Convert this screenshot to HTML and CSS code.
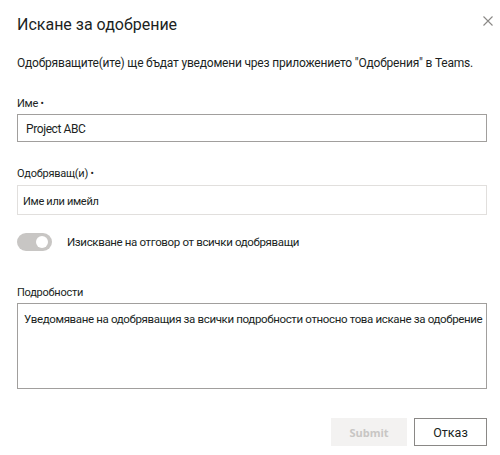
FILE: index.html
```html
<!DOCTYPE html>
<html lang="bg">
<head>
    <meta charset="UTF-8">
    <meta name="viewport" content="width=device-width, initial-scale=1.0">
    <title>Искане за одобрение</title>
    <link rel="stylesheet" href="styles.css">
</head>
<body>
    <div class="dialog">
        <div class="dialog-head">
            <h1>Искане за одобрение</h1>
            <button class="close" type="button" aria-label="Затвори">
                <svg width="10" height="10" viewBox="0 0 10 10">
                    <path d="M0.5 0.5 L9.5 9.5 M9.5 0.5 L0.5 9.5" stroke="#8a8886" stroke-width="1.1" fill="none"/>
                </svg>
            </button>
        </div>

        <p class="intro">Одобряващите(ите) ще бъдат уведомени чрез приложението "Одобрения" в Teams.</p>

        <div class="field field-name">
            <label>Име <span class="req">•</span></label>
            <div class="input input-dark">Project ABC</div>
        </div>

        <div class="field field-approvers">
            <label>Одобряващ(и) <span class="req">•</span></label>
            <div class="input input-light">Име или имейл</div>
        </div>

        <div class="toggle-row">
            <span class="toggle"><span class="knob"></span></span>
            <span class="toggle-label">Изискване на отговор от всички одобряващи</span>
        </div>

        <div class="field field-details">
            <label>Подробности</label>
            <div class="textarea">Уведомяване на одобряващия за всички подробности относно това искане за одобрение</div>
        </div>

        <div class="actions">
            <button class="btn btn-submit" type="button" disabled>Submit</button>
            <button class="btn btn-cancel" type="button">Отказ</button>
        </div>
    </div>
</body>
</html>
```

FILE: styles.css
```css
body {
    margin: 0;
    background: #ffffff;
    font-family: Roboto, "Liberation Sans", Arial, sans-serif;
    color: #201f1e;
}
.dialog {
    width: 500px;
    height: 455px;
    box-sizing: border-box;
    padding: 13px 13px 0 17px;
}
.dialog-head {
    display: flex;
    justify-content: space-between;
    align-items: flex-start;
}
.dialog-head h1 {
    margin: 0;
    font-size: 16px;
    font-weight: normal;
    line-height: 24px;
    color: #201f1e;
}
.close {
    border: none;
    background: none;
    padding: 0;
    margin-top: 3px;
    margin-right: -6px;
    width: 10px;
    height: 10px;
    line-height: 0;
}
.intro {
    margin: 18px 0 0 0;
    font-size: 12px;
    line-height: 16px;
    letter-spacing: -0.2px;
    white-space: nowrap;
}
.field label {
    display: block;
    font-size: 11px;
    line-height: 15px;
    letter-spacing: -0.25px;
}
.req {
    font-size: 10px;
    line-height: 1;
}
.field-name {
    margin-top: 25px;
}
.field-name label {
    margin-bottom: 3px;
}
.field-approvers {
    margin-top: 24px;
}
.field-approvers label {
    margin-bottom: 4px;
}
.field-details {
    margin-top: 34px;
}
.field-details label {
    margin-bottom: 3px;
}
.input {
    box-sizing: border-box;
    white-space: nowrap;
}
.input-dark {
    height: 28px;
    border: 1px solid #a19f9d;
    padding: 3px 8px 0;
    font-size: 12px;
    line-height: 23px;
    letter-spacing: -0.4px;
}
.input-light {
    height: 30px;
    border: 1px solid #e1dfdd;
    padding: 4px 5px 0;
    font-size: 11px;
    line-height: 24px;
    letter-spacing: -0.3px;
}
.toggle-row {
    display: flex;
    align-items: center;
    margin-top: 18px;
    height: 18px;
}
.toggle {
    width: 35px;
    height: 18px;
    border-radius: 9px;
    background: #c8c6c4;
    position: relative;
    flex: none;
}
.knob {
    position: absolute;
    width: 12px;
    height: 12px;
    border-radius: 50%;
    background: #ffffff;
    top: 3px;
    right: 4px;
}
.toggle-label {
    margin-left: 15px;
    font-size: 11.5px;
    line-height: 16px;
    letter-spacing: -0.35px;
}
.textarea {
    height: 86px;
    box-sizing: border-box;
    border: 1px solid #a19f9d;
    padding: 7px 6px;
    font-size: 11.5px;
    line-height: 16px;
    letter-spacing: -0.35px;
    white-space: nowrap;
}
.actions {
    display: flex;
    justify-content: flex-end;
    gap: 7px;
    margin-top: 29px;
}
.btn {
    height: 28px;
    padding: 0;
    box-sizing: border-box;
}
.btn-submit {
    width: 76px;
    border: none;
    background: #f3f2f1;
    color: #c8c6c4;
    font-family: "Open Sans", Roboto, sans-serif;
    font-size: 11px;
    font-weight: 700;
}
.btn-cancel {
    width: 73px;
    border: 1px solid #8a8886;
    background: #ffffff;
    color: #201f1e;
    font-family: Roboto, "Liberation Sans", sans-serif;
    font-size: 12.5px;
}
```
